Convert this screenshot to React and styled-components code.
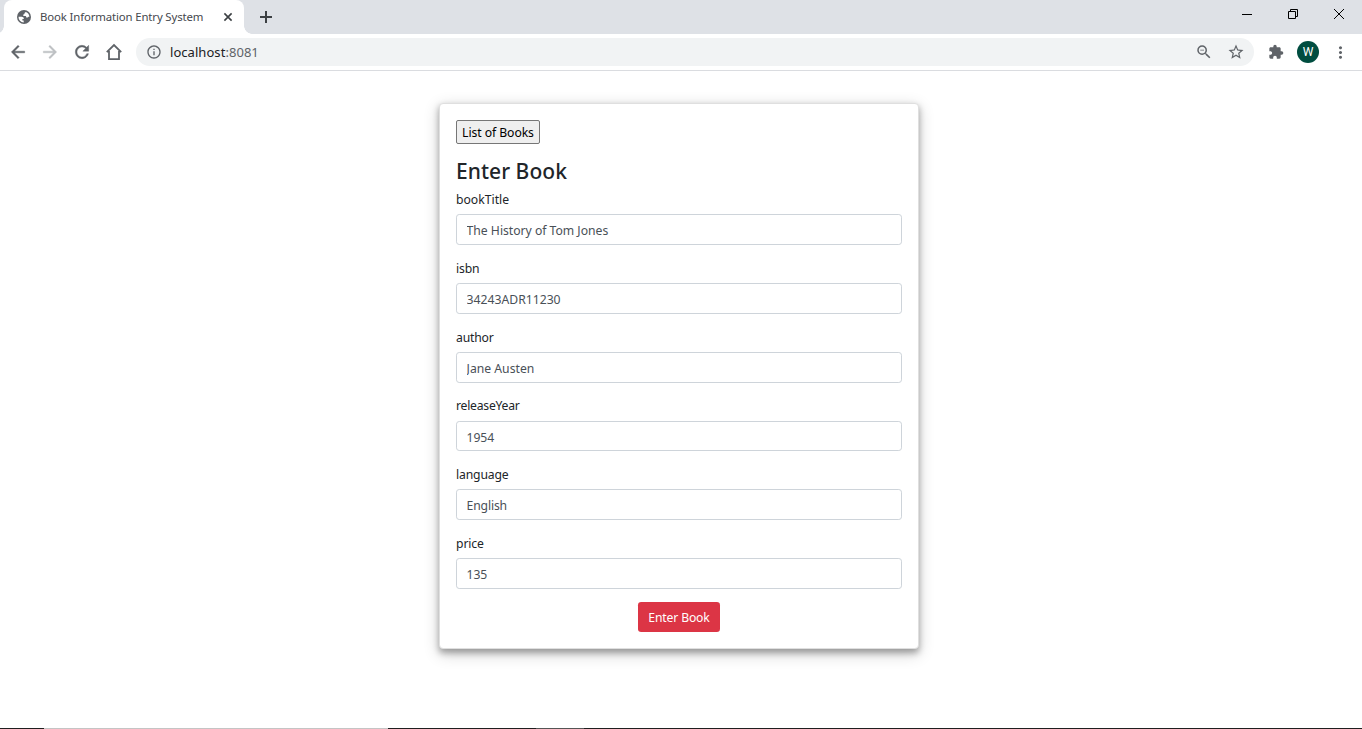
import React from "react";
import styled, { createGlobalStyle } from "styled-components";
import {
  MdArrowBack,
  MdArrowForward,
  MdRefresh,
  MdInfoOutline,
  MdZoomOut,
  MdStarBorder,
  MdExtension,
  MdMoreVert,
} from "react-icons/md";

const GlobalStyle = createGlobalStyle`
  * { box-sizing: border-box; }
  body { margin: 0; background: #fff; overflow: hidden; }
  body, button, input { font-family: "Noto Sans", "Open Sans", sans-serif; }
`;

const Window = styled.div`
  display: flex;
  flex-direction: column;
  width: 1362px;
  height: 729px;
`;

const TabStrip = styled.div`
  display: flex;
  height: 34px;
  padding-left: 4px;
  background: #dee1e6;
`;

const Tab = styled.div`
  position: relative;
  display: flex;
  align-items: center;
  width: 240px;
  height: 34px;
  padding: 0 10px 0 13px;
  border-radius: 8px 8px 0 0;
  background: #fff;
  &::before, &::after {
    content: "";
    position: absolute;
    bottom: 0;
    width: 8px;
    height: 8px;
  }
  &::before { left: -8px; background: radial-gradient(circle at 0 0, transparent 7.5px, #fff 8px); }
  &::after { right: -8px; background: radial-gradient(circle at 100% 0, transparent 7.5px, #fff 8px); }
`;

const TabTitle = styled.span`
  flex: 1;
  margin-left: 9px;
  white-space: nowrap;
  font-size: 11.4px;
  letter-spacing: -0.14px;
  line-height: 16px;
  color: #45484d;
`;

const NewTab = styled.div`
  display: flex;
  align-items: center;
  margin-left: 15px;
`;

const WindowControls = styled.div`
  display: flex;
  align-items: center;
  margin-left: auto;
  height: 28px;
  svg { width: 46px; }
`;

const Toolbar = styled.div`
  display: flex;
  align-items: center;
  height: 37px;
  padding: 0 12px 0 8px;
  border-bottom: 1px solid #dadce0;
  color: #5f6368;
`;

const NavButtons = styled.div`
  display: flex;
  gap: 12px;
  margin-right: 12px;
  svg { display: block; }
  path:not([fill="none"]) { stroke-width: 0.5px; }
`;

const AddressBar = styled.div`
  display: flex;
  align-items: center;
  width: 1118px;
  height: 28px;
  padding: 0 9px 0 10px;
  border-radius: 14px;
  background: #f1f3f4;
`;

const Address = styled.span`
  flex: 1;
  margin-left: 8px;
  font-size: 13px;
  letter-spacing: 0.05px;
  line-height: 20px;
  color: #202124;
`;

const Port = styled.span`
  color: #5f6368;
`;

const AddressActions = styled.div`
  display: flex;
  gap: 14px;
`;

const ProfileArea = styled.div`
  display: flex;
  align-items: center;
  margin-left: 14px;
`;

const Avatar = styled.div`
  width: 22px;
  height: 22px;
  margin: 0 12px 0 13px;
  border-radius: 50%;
  background: #004d40;
  color: #fff;
  font: 400 12px/22px Roboto, sans-serif;
  text-align: center;
`;

const Page = styled.main`
  flex: 1;
  padding: 32px 0 0 439px;
`;

const Card = styled.section`
  width: 480px;
  height: 546px;
  padding: 16px;
  border: 1px solid #dfdfdf;
  border-radius: 4px;
  background: #fff;
  box-shadow: 0 3.2px 6.4px rgba(0, 0, 0, 0.3), 0 4.8px 16px rgba(0, 0, 0, 0.19);
`;

const ListButton = styled.button`
  display: block;
  width: 84px;
  height: 24px;
  padding: 0;
  border: 1px solid #767676;
  border-radius: 2px;
  background: #efefef;
  color: #000;
  font-size: 12.2px;
  letter-spacing: -0.07px;
  white-space: nowrap;
`;

const Heading = styled.h4`
  margin: 14px 0 4.6px;
  font-size: 21px;
  font-weight: 500;
  letter-spacing: 0.05px;
  line-height: 26px;
  color: #212529;
`;

const Field = styled.div`
  margin-bottom: 12.4px;
`;

const Label = styled.label`
  display: block;
  margin-bottom: 5.05px;
  padding-top: 1.35px;
  font-size: 12.2px;
  letter-spacing: ${(p) => p.$tracking}px;
  line-height: 19.2px;
  color: #212529;
`;

const Input = styled.input`
  display: block;
  width: 446px;
  height: 30.8px;
  padding: 2.3px 9.6px 0;
  border: 1px solid #ced4da;
  border-radius: 3.2px;
  outline: 0;
  background: #fff;
  color: #495057;
  font-size: 12.2px;
  letter-spacing: ${(p) => p.$tracking}px;
`;

const SubmitButton = styled.button`
  display: block;
  width: 82px;
  height: 30px;
  margin: 13px auto 0;
  padding: 1.4px 0 0;
  border: 0;
  border-radius: 3.2px;
  background: #dc3545;
  color: #fff;
  font-size: 12.2px;
  letter-spacing: -0.16px;
`;

const TaskbarEdge = styled.div`
  display: flex;
  height: 1px;
  background: #1f1f1f;
`;

const EdgeSegment = styled.span`
  width: ${(p) => p.$width}px;
  background: ${(p) => p.$color};
`;

const FIELDS = [
  { name: "bookTitle", value: "The History of Tom Jones", label: 0, input: -0.02 },
  { name: "isbn", value: "34243ADR11230", label: -0.15, input: 0 },
  { name: "author", value: "Jane Austen", label: -0.2, input: 0 },
  { name: "releaseYear", value: "1954", label: -0.24, input: -0.1 },
  { name: "language", value: "English", label: -0.15, input: -0.15 },
  { name: "price", value: "135", label: -0.1, input: -0.1 },
];

function Globe() {
  return (
    <svg width="14" height="14" viewBox="0 0 14 14">
      <circle cx="7" cy="7" r="7" fill="#5f6368" />
      <path
        d="M8.8 1.9 7.5 3v1.1L6.3 4.6v1.3h1.9c.7 0 1 .4 1 1v.7h1.2c.5 0 .8-.3 1-.8l1-.1A5.5 5.5 0 0 0 8.8 1.9Z M1.5 6.8h3.1c1.4 0 2.2.8 2.2 1.8v.5H5.4v1.5h1.3v1.9A5.5 5.5 0 0 1 1.5 6.8Z"
        fill="#fff"
      />
    </svg>
  );
}

export default function App() {
  return (
    <Window>
      <GlobalStyle />
      <TabStrip>
        <Tab>
          <Globe />
          <TabTitle>Book Information Entry System</TabTitle>
          <svg width="12" height="12" viewBox="0 0 12 12" stroke="#3c4043" strokeWidth="1.6">
            <path d="m2.4 2.4 7.2 7.2m0-7.2L2.4 9.6" />
          </svg>
        </Tab>
        <NewTab>
          <svg width="14" height="14" viewBox="0 0 14 14" stroke="#3c4043" strokeWidth="2">
            <path d="M7 1v12M1 7h12" />
          </svg>
        </NewTab>
        <WindowControls>
          <svg height="28" viewBox="0 0 46 28" stroke="#000">
            <path d="M18 14.5h10" />
          </svg>
          <svg height="28" viewBox="0 0 46 28" fill="none" stroke="#000">
            <path d="M18.5 11.5h7v7h-7zM20.5 11.5v-2h7v7h-2" />
          </svg>
          <svg height="28" viewBox="0 0 46 28" stroke="#000">
            <path d="m18 9 10 10m0-10L18 19" />
          </svg>
        </WindowControls>
      </TabStrip>
      <Toolbar>
        <NavButtons>
          <MdArrowBack size={20} />
          <MdArrowForward size={20} color="#bdc0c3" />
          <MdRefresh size={20} />
          <svg width="20" height="20" viewBox="0 0 20 20">
            <path fill="none" stroke="#5f6368" strokeWidth="1.8" d="M2.8 10.2 10 3.1l7.2 7.1M5 9v8.1h10V9" />
          </svg>
        </NavButtons>
        <AddressBar>
          <MdInfoOutline size={16} />
          <Address>
            localhost<Port>:8081</Port>
          </Address>
          <AddressActions>
            <MdZoomOut size={18} />
            <MdStarBorder size={18} />
          </AddressActions>
        </AddressBar>
        <ProfileArea>
          <MdExtension size={16} />
          <Avatar>W</Avatar>
          <MdMoreVert size={19} />
        </ProfileArea>
      </Toolbar>
      <Page>
        <Card>
          <ListButton>List of Books</ListButton>
          <Heading>Enter Book</Heading>
          {FIELDS.map((f) => (
            <Field key={f.name}>
              <Label htmlFor={f.name} $tracking={f.label}>{f.name}</Label>
              <Input id={f.name} defaultValue={f.value} $tracking={f.input} />
            </Field>
          ))}
          <SubmitButton>Enter Book</SubmitButton>
        </Card>
      </Page>
      <TaskbarEdge>
        <EdgeSegment $width={44} $color="#1f1f1f" />
        <EdgeSegment $width={344} $color="#c4c4c4" />
        <EdgeSegment $width={148} $color="#1f1f1f" />
        <EdgeSegment $width={48} $color="#555" />
      </TaskbarEdge>
    </Window>
  );
}
